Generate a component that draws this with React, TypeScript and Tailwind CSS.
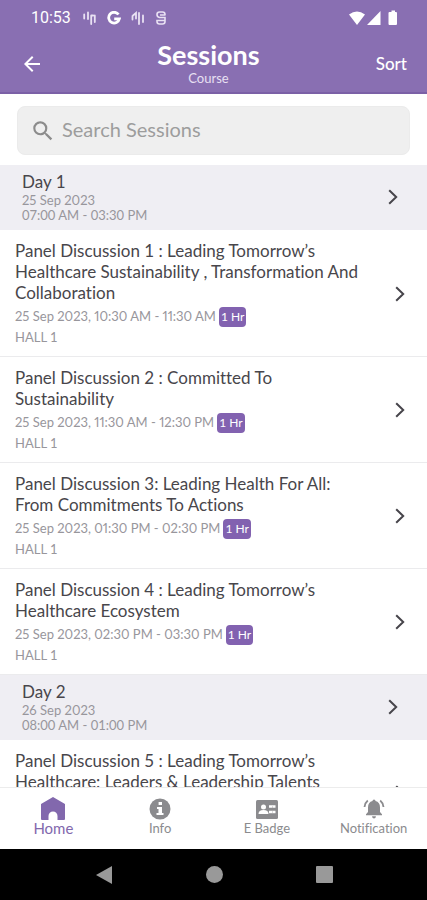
import React from 'react';
import { MdArrowBack, MdSearch } from 'react-icons/md';

type Session = { title: string; time: string; hall: string };
type Day = { label: string; date: string; hours: string; sessions: Session[] };

const days: Day[] = [
  {
    label: 'Day 1',
    date: '25 Sep 2023',
    hours: '07:00 AM - 03:30 PM',
    sessions: [
      {
        title: 'Panel Discussion 1 : Leading Tomorrow’s Healthcare Sustainability , Transformation And Collaboration',
        time: '25 Sep 2023, 10:30 AM - 11:30 AM',
        hall: 'HALL 1',
      },
      { title: 'Panel Discussion 2 : Committed To Sustainability', time: '25 Sep 2023, 11:30 AM - 12:30 PM', hall: 'HALL 1' },
      { title: 'Panel Discussion 3: Leading Health For All: From Commitments To Actions', time: '25 Sep 2023, 01:30 PM - 02:30 PM', hall: 'HALL 1' },
      { title: 'Panel Discussion 4 : Leading Tomorrow’s Healthcare Ecosystem', time: '25 Sep 2023, 02:30 PM - 03:30 PM', hall: 'HALL 1' },
    ],
  },
  {
    label: 'Day 2',
    date: '26 Sep 2023',
    hours: '08:00 AM - 01:00 PM',
    sessions: [
      { title: 'Panel Discussion 5 : Leading Tomorrow’s Healthcare: Leaders & Leadership Talents', time: '26 Sep 2023, 08:00 AM - 09:00 AM', hall: 'HALL 1' },
    ],
  },
];

const Chevron = () => (
  <svg viewBox="0 0 10 16" className="w-[10px] h-4 shrink-0" fill="none" stroke="#47454b" strokeWidth="2">
    <path d="M1.2 1.2 8.2 8l-7 6.8" />
  </svg>
);

const HomeIcon = () => (
  <svg viewBox="0 0 26 24" className="w-[26px] h-6" fill="currentColor">
    <path d="M13 0 25 7V22q0 1-1 1h-6.500v-4a4.500 4.500 0 0 0-9 0v4H2q-1 0-1-1V7z" />
  </svg>
);

const InfoIcon = () => (
  <svg viewBox="0 0 22 22" className="w-[22px] h-[22px]">
    <circle cx="11" cy="11" r="10.500" fill="currentColor" />
    <path d="M9.600 4h3.400v3H9.600zM8 9h5v6h1.500v2H7.500v-2h2v-4H8z" fill="#fff" />
  </svg>
);

const BadgeIcon = () => (
  <svg viewBox="0 0 22 19" className="w-[22px] h-[19px]">
    <rect width="22" height="19" rx="1.500" fill="currentColor" />
    <circle cx="7.500" cy="7" r="2.500" fill="#fff" />
    <path d="M2.500 14q0-4 5-4t5 4z" fill="#fff" />
    <path d="M13 6.500h6.500M13 12h6.500" stroke="#fff" strokeWidth="2.600" />
    <path d="M16 7h1M16 12h1" stroke="currentColor" strokeWidth="0.600" />
  </svg>
);

const BellIcon = () => (
  <svg viewBox="0 0 22 22" className="w-[22px] h-[22px]">
    <path
      d="M11 1.500q1.500 0 1.500 1.600 4.500 1.200 4.500 6.400v4.500l2 2.300v1H3v-1L5 14V9.500q0-5.200 4.500-6.400Q9.500 1.500 11 1.500zM9 18.300h4Q12.700 20.500 11 20.500T9 18.300z"
      fill="currentColor"
    />
    <path d="M4.800 2.500Q2 4.800 1.500 9M17.200 2.500Q20 4.800 20.500 9" fill="none" stroke="currentColor" strokeWidth="1.800" />
  </svg>
);

const tabs = [
  { label: 'Home', icon: <HomeIcon />, active: true },
  { label: 'Info', icon: <InfoIcon /> },
  { label: 'E Badge', icon: <BadgeIcon /> },
  { label: 'Notification', icon: <BellIcon /> },
];

/* Small equalizer-like notification glyph */
const BarsIcon = ({ flipped }: { flipped?: boolean }) => (
  <svg viewBox="0 0 14 14" className="w-[14px] h-[14px]" fill="none" stroke="#e9e1f3" strokeWidth="1.800" strokeLinecap="round">
    {flipped ? (
      <path d="M1.500 5v3.500M2 4.500 5 2v5.500M8 3.500V13M8 3.500V2M12 4.500V11" />
    ) : (
      <path d="M1.200 3.500v4M5 1.500v6.500M8.200 4.500V13M8.200 4.500h2M11.800 4.500V11" />
    )}
  </svg>
);

const StatusBar = () => (
  <div className="flex items-center h-9 pl-[31px] pr-[29px] text-white">
    <span className="w-[52px] font-[Roboto] text-base leading-5">10:53</span>
    <div className="flex items-center gap-[10px]">
      <BarsIcon />
      <svg viewBox="0 0 14 14" className="w-[14px] h-[14px]" fill="none" stroke="#fff" strokeWidth="2.800">
        <path d="M11.500 3.500A5.400 5.400 0 1 0 12.400 7.800H7.200" />
      </svg>
      <BarsIcon flipped />
      <svg viewBox="0 0 12 14" className="w-3 h-[14px]" fill="none" stroke="#e9e1f3" strokeWidth="1.600">
        <path d="M10 4.500V3.500Q10 1 7.500 1h-3Q2 1 2 3.500T4.500 6.500H10v4Q10 13 7.500 13h-3Q2 13 2 10.500V9.500h8M5 4h5" />
      </svg>
    </div>
    <svg viewBox="0 0 50 16" className="ml-auto w-[50px] h-4" fill="currentColor">
      <path d="M1 4.500Q9 -1.500 17 4.500L9 15zM32.500 1v14H19zM41.500 2h2V.5h3.500V2h1q1 0 1 1v11q0 1-1 1h-6.500q-1 0-1-1V3q0-1 1-1z" />
    </svg>
  </div>
);

export default function App() {
  return (
    <div className="h-screen flex flex-col bg-white font-[Lato,sans-serif] [font-variant-ligatures:none] text-[#48464b] overflow-hidden">
      <header className="shrink-0 bg-[#896fb2] border-b-2 border-[#7b60a6] text-white">
        <StatusBar />
        <div className="grid grid-cols-[1fr_auto_1fr] items-center h-14 pl-[10px] pr-5">
          <button aria-label="Back" className="justify-self-start p-[10px]">
            <MdArrowBack size={24} />
          </button>
          <div className="text-center">
            <h1 className="font-bold text-[27px] leading-7">Sessions</h1>
            <p className="text-[13px] leading-[18px] text-[#e8e0f2]">Course</p>
          </div>
          <button className="justify-self-end text-[17px] font-medium">Sort</button>
        </div>
      </header>

      <div className="shrink-0 px-[17px] pt-3 pb-[10px]">
        <label className="flex items-center gap-1 h-[49px] px-3 rounded-lg bg-[#efefef] border border-[#ebebeb]">
          <MdSearch size={26} className="text-[#8c8c8c] shrink-0" />
          <input
            type="text"
            aria-label="Search Sessions"
            placeholder="Search Sessions"
            className="w-full min-w-0 pl-[2px] pb-1 bg-transparent text-xl leading-6 outline-none placeholder:text-[#9d9d9d]"
          />
        </label>
      </div>

      <main className="flex-1 min-h-0 overflow-y-auto [scrollbar-width:none]">
        {days.map((day) => (
          <section key={day.label}>
            <button className="w-full flex items-center justify-between text-left bg-[#efeef3] pl-[22px] pr-[29px] pt-[6px] pb-[7px]">
              <div>
                <h2 className="text-[17px] leading-[22px]">{day.label}</h2>
                <p className="text-[13px] leading-[15px] text-[#98969c] proportional-nums">{day.date}</p>
                <p className="text-[13px] leading-[15px] text-[#98969c]">{day.hours}</p>
              </div>
              <Chevron />
            </button>
            {day.sessions.map((session) => (
              <a
                key={session.title}
                href="#"
                className="flex items-center justify-between pl-[15px] pr-[22px] pt-[10px] pb-[9px] border-b border-[#ebebed]"
              >
                <div className="max-w-[350px]">
                  <h3 className="text-[17px] leading-[21px]">{session.title}</h3>
                  <div className="flex items-center gap-[3px] mt-1 h-5 text-[13px] text-[#98969c]">
                    <span className="proportional-nums">{session.time}</span>
                    <span className="px-[2px] rounded-sm bg-[#8262b0] text-white text-xs leading-5">1 Hr</span>
                  </div>
                  <p className="text-[13px] leading-5 text-[#98969c]">{session.hall}</p>
                </div>
                <Chevron />
              </a>
            ))}
          </section>
        ))}
      </main>

      <nav className="shrink-0 grid grid-cols-4 h-[62px] pt-[9px] bg-white border-t border-[#ececec]">
        {tabs.map((tab) => (
          <button
            key={tab.label}
            className={`flex flex-col items-center ${tab.active ? 'text-[#8268ad] text-[15px]' : 'text-[#8b8b8e] text-[13px]'}`}
          >
            <span className="h-6 flex items-center">{tab.icon}</span>
            <span className="leading-[14px]">{tab.label}</span>
          </button>
        ))}
      </nav>

      {/* Android system keys */}
      <div className="shrink-0 h-[51px] bg-black flex items-center justify-center gap-[93px]">
        <button aria-label="System back">
          <svg viewBox="0 0 18 18" className="w-[18px] h-[18px]" fill="#999">
            <path d="M17 0v18L1 9z" />
          </svg>
        </button>
        <button aria-label="System home" className="w-[17px] h-[17px] rounded-full bg-[#999]" />
        <button aria-label="Overview" className="w-[17px] h-[17px] rounded-[1px] bg-[#999]" />
      </div>
    </div>
  );
}
